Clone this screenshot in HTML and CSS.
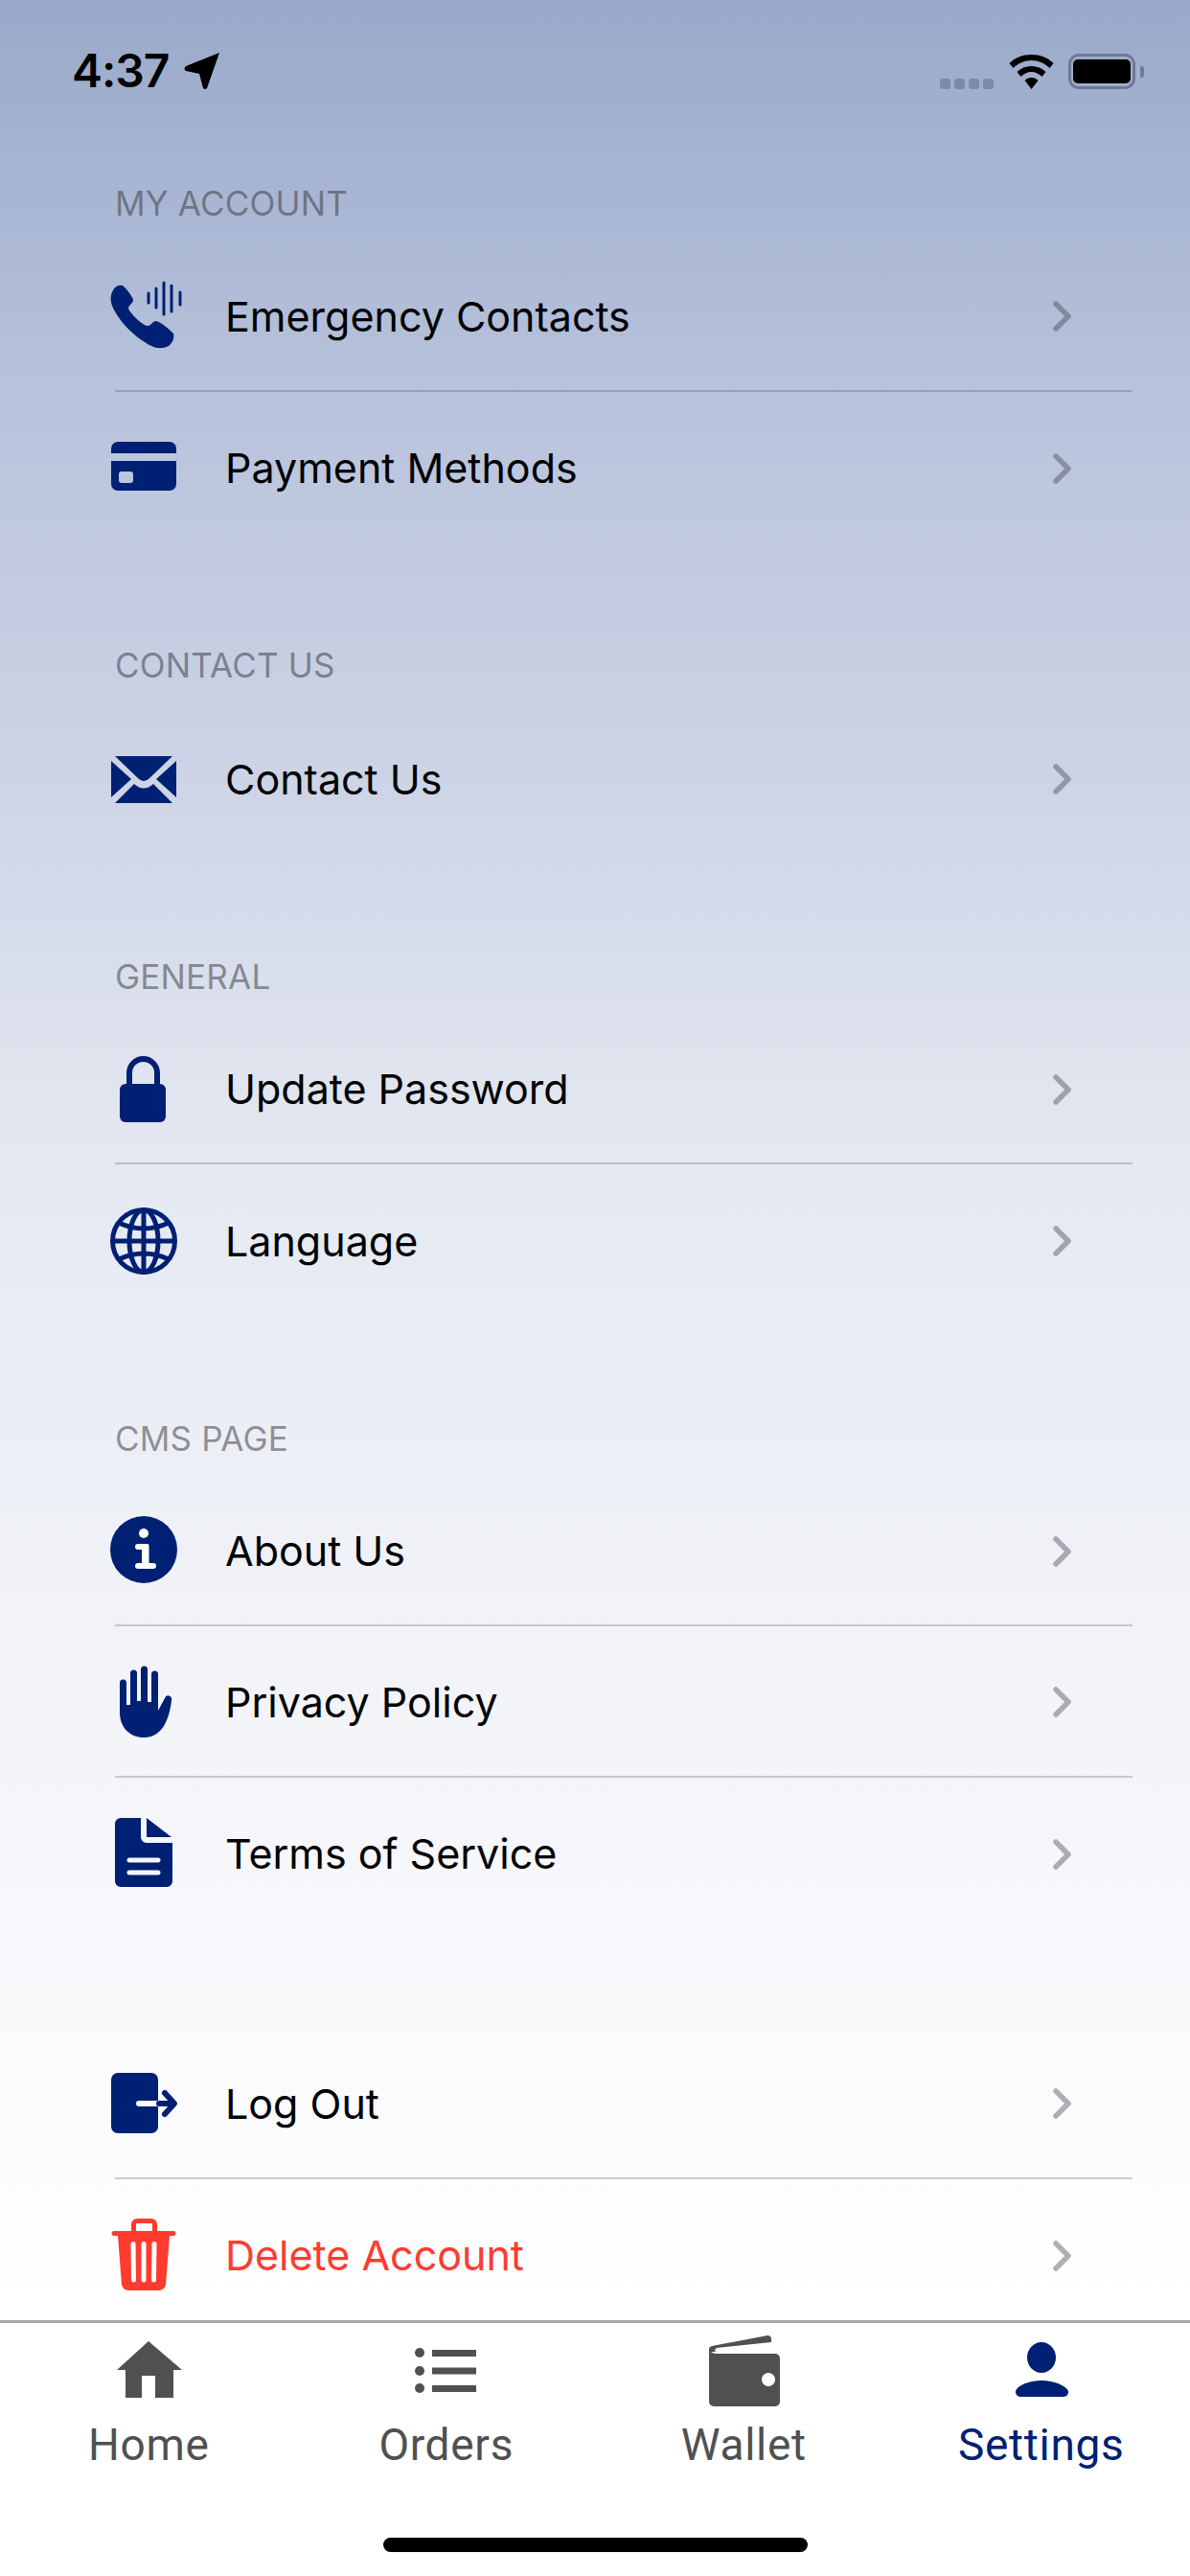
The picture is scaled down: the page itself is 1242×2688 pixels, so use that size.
FILE: index.html
```html
<!DOCTYPE html>
<html lang="en">
<head>
  <meta charset="UTF-8">
  <meta name="viewport" content="width=device-width, initial-scale=1.0">
  <title>Settings</title>
  <link rel="stylesheet" href="styles.css">
</head>
<body>
  <div class="screen">
    <!-- Status bar -->
    <header class="status-bar">
      <div class="status-left">
        <span class="time">4:37</span>
        <svg class="location" viewBox="0 0 40 40"><path d="M38 1 L3 15 Q0 18 3 20 L17 23 L21 38 Q23 40 25 38 Z"/></svg>
      </div>
      <div class="status-right">
        <div class="signal"><i></i><i></i><i></i><i></i></div>
        <svg class="wifi" viewBox="0 0 46 36"><path d="M23 0 C14 0 6 3 0 9 L4 14 C9 9 16 6 23 6 C30 6 37 9 42 14 L46 9 C40 3 32 0 23 0Z M23 12 C17 12 12 14 8 18 L12 23 C15 20 19 18 23 18 C27 18 31 20 34 23 L38 18 C34 14 29 12 23 12Z M23 24 C20 24 18 25 16 27 L23 36 L30 27 C28 25 26 24 23 24Z"/></svg>
        <div class="battery"><div class="battery-fill"></div></div>
        <div class="battery-cap"></div>
      </div>
    </header>

    <main class="settings">
      <section class="group">
        <h2 class="group-title">MY ACCOUNT</h2>
        <a class="row">
          <svg class="row-icon" viewBox="0 0 80 80">
            <path d="M8 14 C10 9 15 8 18 9 C21 11 28 20 29 24 C29 28 24 29 24 33 C26 38 38 50 44 51 C48 51 49 46 53 46 C58 47 66 54 71 59 C72 63 71 68 66 72 C60 75 54 75 48 72 C32 64 14 47 7 30 C5 24 5 19 8 14Z"/>
            <path class="bars" d="M45 17V27 M53 12V32 M61 6V39 M69 9V36 M78 16V29"/>
          </svg>
          <span class="row-label">Emergency Contacts</span>
          <svg class="chevron" viewBox="0 0 24 36"><path d="M5 5 L18 18 L5 31"/></svg>
        </a>
        <a class="row">
          <svg class="row-icon" viewBox="0 0 80 80">
            <path d="M6 26 V21 a7 7 0 0 1 7-7 H67 a7 7 0 0 1 7 7 V26 Z"/>
            <path fill-rule="evenodd" d="M6 34 H74 V58 a7 7 0 0 1-7 7 H13 a7 7 0 0 1-7-7 Z M17 45 a3 3 0 0 0-3 3 v6 a3 3 0 0 0 3 3 h9 a3 3 0 0 0 3-3 v-6 a3 3 0 0 0-3-3 Z"/>
          </svg>
          <span class="row-label">Payment Methods</span>
          <svg class="chevron" viewBox="0 0 24 36"><path d="M5 5 L18 18 L5 31"/></svg>
        </a>
      </section>

      <section class="group">
        <h2 class="group-title">CONTACT US</h2>
        <a class="row">
          <svg class="row-icon" viewBox="0 0 80 80">
            <path d="M10 17 H70 L46 40 Q40 46 34 40 Z"/>
            <path d="M6 22 L27 41 L6 60 Z"/>
            <path d="M74 22 L53 41 L74 60 Z"/>
            <path d="M10 66 L30 46 Q40 55 50 46 L70 66 Z"/>
          </svg>
          <span class="row-label">Contact Us</span>
          <svg class="chevron" viewBox="0 0 24 36"><path d="M5 5 L18 18 L5 31"/></svg>
        </a>
      </section>

      <section class="group">
        <h2 class="group-title">GENERAL</h2>
        <a class="row">
          <svg class="row-icon" viewBox="0 0 80 80">
            <path class="outline" d="M25 38 V24.500 a14.500 14.500 0 0 1 29 0 V38"/>
            <rect x="15" y="36" width="48" height="40" rx="6"/>
          </svg>
          <span class="row-label">Update Password</span>
          <svg class="chevron" viewBox="0 0 24 36"><path d="M5 5 L18 18 L5 31"/></svg>
        </a>
        <a class="row">
          <svg class="row-icon" viewBox="0 0 80 80">
            <g class="outline thin">
              <circle cx="40" cy="41" r="32.500"/>
              <ellipse cx="40" cy="41" rx="15" ry="32.500"/>
              <path d="M40 8 V74 M7 41 H73 M14 22 Q40 34 66 22 M14 60 Q40 48 66 60"/>
            </g>
          </svg>
          <span class="row-label">Language</span>
          <svg class="chevron" viewBox="0 0 24 36"><path d="M5 5 L18 18 L5 31"/></svg>
        </a>
      </section>

      <section class="group">
        <h2 class="group-title">CMS PAGE</h2>
        <a class="row">
          <svg class="row-icon" viewBox="0 0 80 80">
            <circle cx="40" cy="40" r="35"/>
            <circle class="cut" cx="40" cy="23" r="5"/>
            <path class="cut" d="M34 34 H44 a1.500 1.500 0 0 1 1.500 1.500 V54 H50 a3 3 0 0 1 0 6 H34 a3 3 0 0 1 0-6 H38 V40 H34 a3 3 0 0 1 0-6 Z"/>
          </svg>
          <span class="row-label">About Us</span>
          <svg class="chevron" viewBox="0 0 24 36"><path d="M5 5 L18 18 L5 31"/></svg>
        </a>
        <a class="row">
          <svg class="row-icon" viewBox="0 0 80 80">
            <path d="M15 21 a3.500 3.500 0 0 1 7 0 V44 h4 V11 a3.500 3.500 0 0 1 7 0 V40 h4 V7 a3.500 3.500 0 0 1 7 0 V41 h4 V12 a3.500 3.500 0 0 1 7 0 V50 L62 37 a3.500 3.500 0 0 1 7 2 C68 50 64 64 58 70 C52 77 45 78 40 78 C26 78 15 68 15 52 Z"/>
          </svg>
          <span class="row-label">Privacy Policy</span>
          <svg class="chevron" viewBox="0 0 24 36"><path d="M5 5 L18 18 L5 31"/></svg>
        </a>
        <a class="row">
          <svg class="row-icon" viewBox="0 0 80 80">
            <path fill-rule="evenodd" d="M16 4 H37 V24 a6 6 0 0 0 6 6 H70 V70 a6 6 0 0 1-6 6 H16 a6 6 0 0 1-6-6 V10 a6 6 0 0 1 6-6 Z M25 45.500 a2.500 2.500 0 0 0 0 5 H55 a2.500 2.500 0 0 0 0-5 Z M25 58.500 a2.500 2.500 0 0 0 0 5 H55 a2.500 2.500 0 0 0 0-5 Z"/>
            <path d="M43 4 L69 24 H43 Z"/>
          </svg>
          <span class="row-label">Terms of Service</span>
          <svg class="chevron" viewBox="0 0 24 36"><path d="M5 5 L18 18 L5 31"/></svg>
        </a>
      </section>

      <section class="group group-actions">
        <a class="row">
          <svg class="row-icon" viewBox="0 0 80 80">
            <path fill-rule="evenodd" d="M13 9 H48 a7 7 0 0 1 7 7 V38 H35 a3 3 0 0 0 0 6 H55 V65 a7 7 0 0 1-7 7 H13 a7 7 0 0 1-7-7 V16 a7 7 0 0 1 7-7 Z"/>
            <path class="outline arrow" d="M56 41 H71 M62 30 L72 41 L62 52"/>
          </svg>
          <span class="row-label">Log Out</span>
          <svg class="chevron" viewBox="0 0 24 36"><path d="M5 5 L18 18 L5 31"/></svg>
        </a>
        <a class="row row-danger">
          <svg class="row-icon" viewBox="0 0 80 80">
            <path fill-rule="evenodd" d="M33 3 H48 a6 6 0 0 1 6 6 V16 H71 a2 2 0 0 1 0 5 H67 L63 72 a7 7 0 0 1-7 6 H24 a7 7 0 0 1-7-6 L13 21 H9 a2 2 0 0 1 0-5 H27 V9 a6 6 0 0 1 6-6 Z M33 8 a1 1 0 0 0-1 1 V16 H49 V9 a1 1 0 0 0-1-1 Z M29 27 a2.500 2.500 0 0 0-2.500 2.500 L27 67 a2.500 2.500 0 0 0 5 0 L31.500 29.500 a2.500 2.500 0 0 0-2.500-2.500 Z M40 27 a2.500 2.500 0 0 0-2.500 2.500 V67 a2.500 2.500 0 0 0 5 0 V29.500 a2.500 2.500 0 0 0-2.500-2.500 Z M51 27 a2.500 2.500 0 0 0-2.500 2.500 L48 67 a2.500 2.500 0 0 0 5 0 L53.500 29.500 a2.500 2.500 0 0 0-2.500-2.500 Z"/>
          </svg>
          <span class="row-label">Delete Account</span>
          <svg class="chevron" viewBox="0 0 24 36"><path d="M5 5 L18 18 L5 31"/></svg>
        </a>
      </section>
    </main>

    <!-- Barra de abas -->
    <nav class="tab-bar">
      <div class="tabs">
        <div class="tab">
          <svg class="tab-icon" viewBox="0 0 80 70"><path fill-rule="evenodd" d="M40 8 L75 38 H66 V67 H47 V44 H33 V67 H16 V38 H7 Z"/></svg>
          <span class="tab-label">Home</span>
        </div>
        <div class="tab">
          <svg class="tab-icon" viewBox="0 0 80 70">
            <circle cx="12" cy="20" r="5"/><circle cx="12" cy="39" r="5"/><circle cx="12" cy="57" r="5"/>
            <rect x="25" y="17" width="46" height="7"/><rect x="25" y="35.500" width="46" height="7"/><rect x="25" y="54" width="46" height="7"/>
          </svg>
          <span class="tab-label">Orders</span>
        </div>
        <div class="tab">
          <svg class="tab-icon" viewBox="0 0 80 70">
            <path d="M4 16 Q4 14 7 13 L65 2 Q69 2 69 6 V9 L12 15 Q8 18 12 19 H4 Z"/>
            <path fill-rule="evenodd" d="M4 16 Q6 21 12 21 H73 a5 5 0 0 1 5 5 V71 a5 5 0 0 1-5 5 H9 a5 5 0 0 1-5-5 Z M66 41 a7 7 0 1 0 0.010 0 Z"/>
          </svg>
          <span class="tab-label">Wallet</span>
        </div>
        <div class="tab tab-active">
          <svg class="tab-icon" viewBox="0 0 80 70">
            <ellipse cx="40" cy="25" rx="15" ry="16"/>
            <path d="M18 66 a5 5 0 0 1-5-6 C15 54 27 49 40 49 C53 49 65 54 68 60 a5 5 0 0 1-5 6 Z"/>
          </svg>
          <span class="tab-label">Settings</span>
        </div>
      </div>
      <div class="home-indicator"></div>
    </nav>
  </div>
</body>
</html>
```

FILE: styles.css
```css
/* styles.css */

* {
  box-sizing: border-box;
}

body {
  margin: 0;
  font-family: Inter, 'Noto Sans', sans-serif;
  background-color: #fff;
}

.screen {
  width: 1242px;
  height: 2688px;
  display: flex;
  flex-direction: column;
  overflow: hidden;
  background: linear-gradient(180deg, #9aa9ca 0, #b7c2db 400px, #cdd4e6 812px, #e4e8f1 1200px, #f0f2f7 1650px, #f7f8fb 2000px, #fdfdfe 2300px, #fff 2420px);
}

/* Status bar */
.status-bar {
  height: 191px;
  flex-shrink: 0;
  display: flex;
  justify-content: space-between;
  align-items: flex-start;
  padding: 48px 48px 0 75px;
}

.status-left {
  display: flex;
  align-items: center;
  gap: 15px;
}

.time {
  font-size: 48px;
  line-height: 52px;
  font-weight: 600;
  letter-spacing: -1px;
  color: #000;
}

.location {
  width: 40px;
  height: 40px;
  fill: #000;
}

.status-right {
  display: flex;
  align-items: center;
  padding-top: 8px;
}

.signal {
  display: flex;
  gap: 4px;
  align-self: flex-end;
  margin-right: 15px;
}

.signal i {
  width: 11px;
  height: 11px;
  border-radius: 3px;
  background-color: #7f8aa6;
}

.wifi {
  width: 49px;
  height: 36px;
  fill: #000;
  margin-right: 14px;
}

.battery {
  width: 70px;
  height: 37px;
  border: 3px solid #6f7a94;
  border-radius: 11px;
  padding: 3px 2px;
}

.battery-fill {
  width: 100%;
  height: 100%;
  border-radius: 5px;
  background-color: #000;
}

.battery-cap {
  width: 4px;
  height: 12px;
  margin-left: 5px;
  border-radius: 0 3px 3px 0;
  background-color: #6f7a94;
}

/* Lista de ajustes */
.settings {
  flex: 1;
  min-height: 0;
  overflow: hidden;
  display: flex;
  flex-direction: column;
  gap: 107px;
  padding: 0 60px 0 120px;
}

.group-actions {
  margin-top: -3px;
}

.group-title {
  margin: 0 0 19px;
  padding-top: 1px;
  font-size: 35px;
  line-height: 40px;
  font-weight: 400;
  letter-spacing: 0.2px;
  color: rgba(60, 60, 67, 0.55);
}

.row {
  display: flex;
  align-items: center;
  height: 157.5px;
  border-bottom: 2px solid rgba(60, 60, 67, 0.24);
  position: relative;
  color: #000;
}

.group .row:last-child {
  border-bottom: none;
}

.row-icon {
  width: 80px;
  height: 80px;
  flex-shrink: 0;
  margin-left: -10px;
  margin-right: 45px;
  fill: #002073;
}

.row-icon .bars {
  fill: none;
  stroke: #002073;
  stroke-width: 3;
  stroke-linecap: round;
}

.row-icon .outline {
  fill: none;
  stroke: #002073;
  stroke-width: 6;
}

.row-icon .outline.thin {
  stroke-width: 5;
}

.row-icon .arrow {
  stroke-linecap: round;
  stroke-linejoin: round;
}

.row-icon .cut {
  fill: #fff;
}

.row-label {
  flex: 1;
  font-size: 43px;
  line-height: 52px;
  padding-top: 2px;
}

.chevron {
  width: 24px;
  height: 36px;
  margin-top: 3px;
  margin-right: 61px;
  fill: none;
  stroke: rgba(60, 60, 67, 0.4);
  stroke-width: 5.500;
  stroke-linecap: round;
  stroke-linejoin: round;
}

.row-danger {
  color: #ff3b30;
}

.row-danger .row-icon {
  fill: #ff3b30;
}

/* Barra de abas */
.tab-bar {
  height: 267px;
  flex-shrink: 0;
  background-color: #fff;
  border-top: 3px solid #a8a8a8;
  display: flex;
  flex-direction: column;
  position: relative;
}

.tabs {
  display: grid;
  grid-template-columns: repeat(4, 1fr);
  padding-top: 11px;
}

.tab {
  display: flex;
  flex-direction: column;
  align-items: center;
  color: #505050;
}

.tab-icon {
  width: 80px;
  height: 70px;
  overflow: visible;
  fill: #505050;
}

.tab-label {
  font-family: Roboto, sans-serif;
  font-size: 46px;
  line-height: 52px;
  letter-spacing: 0.7px;
  margin-top: 20px;
}

.tab-active {
  color: #002073;
}

.tab-active .tab-icon {
  fill: #002073;
}

.home-indicator {
  position: absolute;
  left: 400px;
  bottom: 25px;
  width: 443px;
  height: 15px;
  border-radius: 8px;
  background-color: #000;
}
```
